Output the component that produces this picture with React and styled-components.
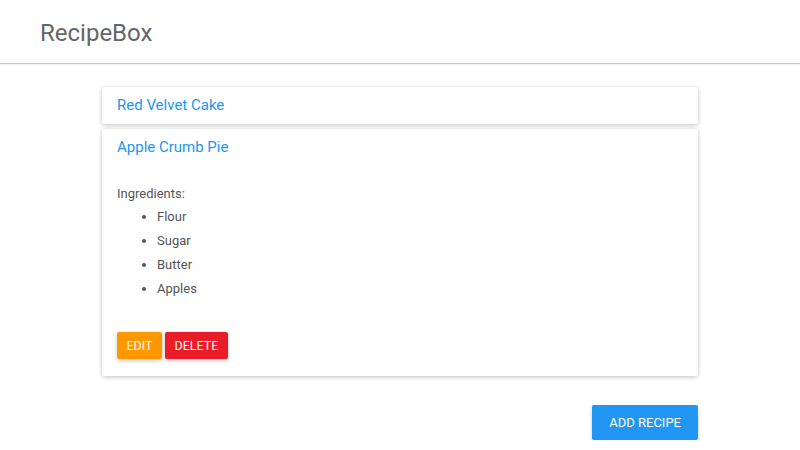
import React from "react";
import styled, { createGlobalStyle } from "styled-components";

const GlobalStyle = createGlobalStyle`
  body {
    margin: 0;
    background: #fff;
    font-family: Roboto, "Liberation Sans", sans-serif;
    color: #555;
  }
`;

/* header */

const Header = styled.header`
  height: 64px;
  border-bottom: 1px solid #c8c8c8;
  box-shadow: 0 1px 2px rgba(0, 0, 0, 0.08);
  display: flex;
  align-items: center;
  padding: 2px 0 0 40px;
  box-sizing: border-box;
`;

const Brand = styled.h1`
  margin: 0;
  font-size: 24px;
  font-weight: 400;
  color: #666;
`;

/* recipe list */

const Main = styled.main`
  width: 596px;
  margin: 23px auto 0;
  display: flex;
  flex-direction: column;
  gap: 5px;
`;

const Card = styled.section`
  background: #fff;
  border-radius: 2px;
  box-shadow: 0 1px 4px rgba(0, 0, 0, 0.25);
  padding: ${(p) => (p.$open ? "8px 15px 17px" : "8px 15px 9px")};
`;

const Title = styled.h2`
  margin: 0;
  font-size: 15px;
  font-weight: 400;
  line-height: 20px;
  color: #2196f3;
`;

const Body = styled.div`
  padding-top: 25px;
  font-size: 13px;
  line-height: 24px;
`;

const List = styled.ul`
  margin: -1px 0 0;
  padding-left: 40px;
  list-style: disc;
`;

const Item = styled.li``;

const Actions = styled.div`
  display: flex;
  gap: 3px;
  margin-top: 31px;
`;

const Button = styled.button`
  border: none;
  border-radius: 2px;
  font-family: Roboto, "Liberation Sans", sans-serif;
  font-size: ${(p) => (p.$big ? "13px" : "12.5px")};
  text-transform: uppercase;
  color: #fff;
  background: ${(p) => p.$bg};
  height: ${(p) => (p.$big ? "35px" : "27px")};
  padding: ${(p) => (p.$big ? "0 17px" : "0 9.5px")};
  box-shadow: 0 2px 4px rgba(0, 0, 0, 0.2);
  cursor: pointer;
`;

const Footer = styled.div`
  width: 596px;
  margin: 29px auto 0;
  display: flex;
  justify-content: flex-end;
`;

const recipes = [
  { name: "Red Velvet Cake", ingredients: [] },
  { name: "Apple Crumb Pie", ingredients: ["Flour", "Sugar", "Butter", "Apples"], open: true },
];

export default function App() {
  return (
    <>
      <GlobalStyle />
      <Header>
        <Brand>RecipeBox</Brand>
      </Header>
      <Main>
        {recipes.map((r) => (
          <Card key={r.name} $open={r.open}>
            <Title>{r.name}</Title>
            {r.open && (
              <Body>
                Ingredients:
                <List>
                  {r.ingredients.map((i) => (
                    <Item key={i}>{i}</Item>
                  ))}
                </List>
                <Actions>
                  <Button $bg="#ff9800">Edit</Button>
                  <Button $bg="#e91c27">Delete</Button>
                </Actions>
              </Body>
            )}
          </Card>
        ))}
      </Main>
      <Footer>
        <Button $big $bg="#2196f3">Add Recipe</Button>
      </Footer>
    </>
  );
}
